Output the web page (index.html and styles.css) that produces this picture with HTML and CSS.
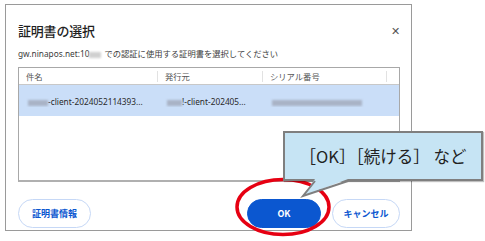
FILE: index.html
```html
<!DOCTYPE html>
<html lang="ja">
<head>
    <meta charset="UTF-8">
    <title>証明書の選択</title>
    <link rel="stylesheet" href="styles.css">
</head>
<body>
    <div class="dialog">
        <div class="dialog-head">
            <h1>証明書の選択</h1>
            <span class="close">&#x2715;</span>
        </div>
        <p class="lead">gw.ninapos.net:10<span class="blur light"></span>での認証に使用する証明書を選択してください</p>

        <div class="cert-table">
            <div class="row head">
                <div class="cell c1">件名</div>
                <div class="cell c2">発行元</div>
                <div class="cell c3">シリアル番号</div>
                <div class="cell c4"></div>
            </div>
            <div class="row selected">
                <div class="cell c1"><span class="blur w20"></span>-client-2024052114393...</div>
                <div class="cell c2"><span class="blur w15"></span>!-client-202405...</div>
                <div class="cell c3"><span class="blur w92"></span></div>
                <div class="cell c4"></div>
            </div>
        </div>

        <div class="dialog-foot">
            <button class="btn">証明書情報</button>
            <div class="right">
                <button class="btn primary">OK</button>
                <button class="btn">キャンセル</button>
            </div>
        </div>
    </div>

    <!-- annotation drawn over the dialog -->
    <svg class="ring" width="100" height="62" viewBox="0 0 100 62">
        <ellipse cx="49" cy="30" rx="46" ry="27.5" fill="none" stroke="#e60012" stroke-width="3.5"/>
    </svg>
    <div class="callout">
        <span>［OK］［続ける］ など</span>
        <svg class="tail" width="52" height="20" viewBox="0 0 52 20">
            <polygon points="15,0 48,0 3,17" fill="#c6e4f4"/>
            <polyline points="15,2 3,17 48,2" fill="none" stroke="#7f7f7f" stroke-width="2"/>
        </svg>
    </div>
</body>
</html>
```

FILE: styles.css
```css
body {
    margin: 0;
    background: #fff;
    font-family: "Noto Sans", "Noto Sans CJK JP", sans-serif;
    color: #1f1f1f;
    width: 485px;
    height: 241px;
    overflow: hidden;
}
.dialog {
    margin: 4px 0 0 5px;
    width: 382px;
    height: 225px;
    border: 1px solid #9a9a9a;
    padding: 0 11px 0 12px;
    display: flex;
    flex-direction: column;
}
.dialog-head {
    display: flex;
    justify-content: space-between;
    align-items: center;
    height: 30px;
    margin-top: 10px;
}
.dialog-head h1 {
    margin: 0;
    font-size: 13px;
    font-weight: 500;
    font-family: "Noto Sans CJK JP", sans-serif;
    letter-spacing: -0.2px;
}
.close {
    font-size: 11px;
    color: #555;
    margin-right: 0;
}
.lead {
    margin: 0;
    height: 18px;
    line-height: 18px;
    font-size: 8.3px;
    color: #3c3c3c;
    white-space: nowrap;
}
.blur {
    display: inline-block;
    height: 6px;
    background: #a9b3c6;
    filter: blur(1.2px);
    vertical-align: middle;
}
.blur.light {
    width: 12px;
    background: #d0d0d0;
    margin-right: 3px;
}
.w20 { width: 20px; }
.w15 { width: 15px; }
.w92 { width: 90px; }

.cert-table {
    margin-top: 4px;
    height: 112px;
    border: 1px solid #a8a8a8;
    border-bottom: 2px solid #b0b0b0;
    font-size: 8.3px;
}
.row {
    display: flex;
}
.row.head {
    height: 16px;
    border-bottom: 1px solid #c8c8c8;
    color: #555;
}
.row.head .cell {
    padding-left: 7px;
    border-right: 1px solid #e2e2e2;
    height: 11px;
    margin-top: 3px;
    line-height: 11px;
}
.row.head .c4 {
    border-right: none;
}
.row.selected {
    height: 31px;
    background: #cadef8;
    align-items: center;
    color: #2a2a2a;
    padding-top: 2px;
    box-sizing: border-box;
}
.row.selected .cell {
    padding-left: 9px;
    white-space: nowrap;
}
.cell {
    box-sizing: border-box;
    overflow: hidden;
}
.c1 { width: 139px; }
.c2 { width: 105px; }
.c3 { width: 124px; }
.c4 { flex: 1; }

.dialog-foot {
    display: flex;
    justify-content: space-between;
    align-items: center;
    margin-top: 17px;
}
.right {
    display: flex;
    gap: 11px;
}
.btn {
    height: 29px;
    border-radius: 15px;
    border: 1px solid #c6d8f6;
    background: #fff;
    color: #0b57d0;
    font-family: "Noto Sans CJK JP", sans-serif;
    font-size: 9px;
    font-weight: 700;
    padding: 0;
    width: 73px;
}
.btn.primary {
    width: 74px;
    background: #0b57d0;
    border-color: #0b57d0;
    color: #fff;
}
.right .btn:last-child {
    width: 68px;
}

.ring {
    position: absolute;
    left: 234px;
    top: 177px;
}
.callout {
    position: absolute;
    left: 283px;
    top: 131px;
    width: 196px;
    height: 46px;
    border: 2px solid #7f7f7f;
    background: #c6e4f4;
    box-shadow: 1px 1px 1px rgba(0, 0, 0, 0.25);
    display: flex;
    align-items: center;
    justify-content: center;
    font-family: "Noto Sans CJK JP", sans-serif;
    font-size: 16.5px;
    color: #222;
}
.tail {
    position: absolute;
    left: 15px;
    top: 46px;
}
```
